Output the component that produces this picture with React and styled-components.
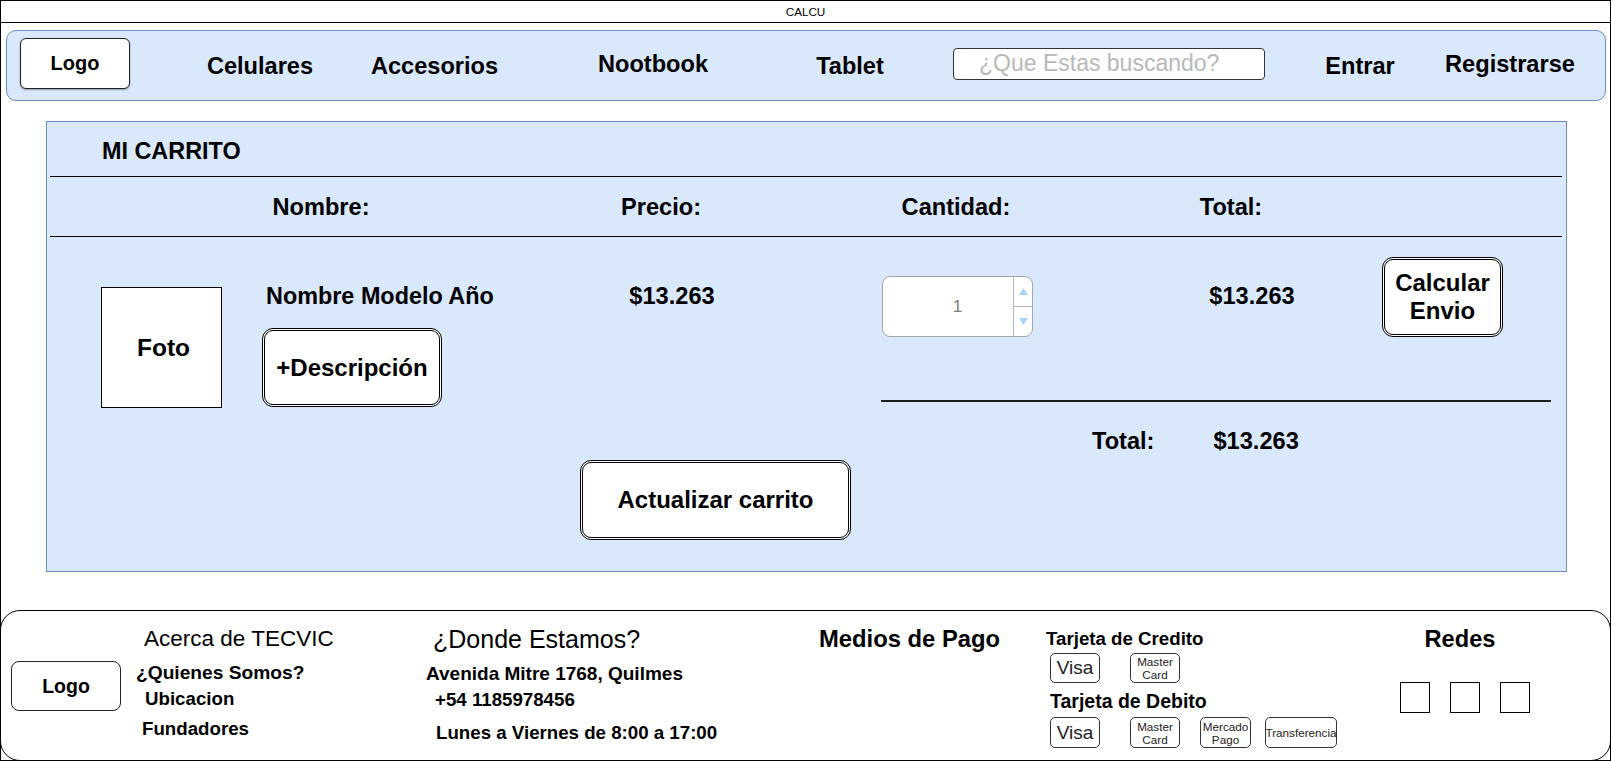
import React from 'react';
import styled, { createGlobalStyle } from 'styled-components';

const GlobalStyle = createGlobalStyle`
  html, body {
    margin: 0;
    padding: 0;
    background: #fff;
  }
  body {
    font-family: "Liberation Sans", Arial, Helvetica, sans-serif;
    color: #000;
  }
  * {
    box-sizing: border-box;
  }
`;

const Frame = styled.div`
  width: 1611px;
  height: 761px;
  border: 1px solid #000;
  display: flex;
  flex-direction: column;
`;

const TitleBar = styled.div`
  height: 22px;
  border-bottom: 1px solid #000;
  font-size: 11.7px;
  line-height: 21px;
  text-align: center;
`;

/* ---------- top navigation ---------- */

const Nav = styled.nav`
  margin: 7px 4px 0 5px;
  height: 71px;
  background: #dae8fc;
  border: 1px solid #6c8ebf;
  border-radius: 10px;
  display: flex;
  align-items: center;
  padding-left: 13px;
`;

const LogoBox = styled.div`
  width: ${(p) => p.$w}px;
  height: ${(p) => p.$h}px;
  margin-top: ${(p) => p.$mt || 0}px;
  margin-bottom: ${(p) => p.$mb || 0}px;
  flex-shrink: 0;
  background: #fff;
  border: 1px solid #222;
  border-radius: ${(p) => p.$r}px;
  box-shadow: ${(p) => (p.$shadow ? '0 1px 2px rgba(0,0,0,0.35)' : 'none')};
  display: flex;
  align-items: center;
  justify-content: center;
  font-weight: bold;
  font-size: ${(p) => p.$fs}px;
`;

const NavLink = styled.a`
  width: ${(p) => p.$w}px;
  margin-left: ${(p) => p.$ml}px;
  margin-bottom: ${(p) => (p.$up ? 4 : 0)}px;
  flex-shrink: 0;
  display: flex;
  justify-content: center;
  white-space: nowrap;
  font-size: 23.6px;
  font-weight: bold;
  color: #000;
  text-decoration: none;
  line-height: 28px;
`;

const SearchInput = styled.input`
  width: 312px;
  height: 32px;
  margin-left: 63px;
  margin-bottom: 4px;
  flex-shrink: 0;
  border: 1px solid #333;
  border-radius: 4px;
  background: #fff;
  text-align: left;
  font-family: "Liberation Sans", Arial, Helvetica, sans-serif;
  font-size: 23px;
  padding: 0 0 0 25px;
  outline: none;

  &::placeholder {
    color: #b8b8b8;
  }
`;

/* ---------- cart panel ---------- */

const Panel = styled.section`
  margin: 20px 43px 0 45px;
  height: 451px;
  background: #dae8fc;
  border: 1px solid #6c8ebf;
  display: flex;
  flex-direction: column;
`;

const PanelTitle = styled.h2`
  margin: 0;
  height: 54px;
  padding: 4px 0 0 55px;
  line-height: 50px;
  font-size: 23.4px;
  font-weight: bold;
`;

const Rule = styled.div`
  height: ${(p) => p.$h || 1}px;
  margin: ${(p) => p.$m};
  background: ${(p) => p.$c || '#000'};
  flex-shrink: 0;
`;

const HeaderRow = styled.div`
  height: 59px;
  display: flex;
  align-items: center;
`;

const Cell = styled.div`
  width: ${(p) => p.$w}px;
  margin-left: ${(p) => p.$ml || 0}px;
  margin-top: ${(p) => p.$mt || 0}px;
  flex-shrink: 0;
  display: flex;
  justify-content: center;
  white-space: nowrap;
  font-size: 23.6px;
  font-weight: bold;
  line-height: 26px;
`;

const ItemRow = styled.div`
  display: flex;
  align-items: flex-start;
`;

const Photo = styled.div`
  width: 121px;
  height: 121px;
  margin: 50px 0 0 54px;
  flex-shrink: 0;
  background: #fff;
  border: 1px solid #000;
  display: flex;
  align-items: center;
  justify-content: center;
  padding-left: 4px;
  font-size: 24.5px;
  font-weight: bold;
`;

const NameCol = styled.div`
  width: 300px;
  margin-left: 40px;
  flex-shrink: 0;
  display: flex;
  flex-direction: column;
  align-items: flex-start;
`;

const ProductName = styled.div`
  margin-top: 46px;
  padding-left: 4px;
  line-height: 26px;
  font-size: 23.4px;
  font-weight: bold;
  white-space: nowrap;
`;

const DoubleButton = styled.button`
  width: ${(p) => p.$w}px;
  height: ${(p) => p.$h}px;
  margin-top: ${(p) => p.$mt || 0}px;
  margin-left: ${(p) => p.$ml || 0}px;
  flex-shrink: 0;
  padding: 0;
  background: #fff;
  border: 3px double #000;
  border-radius: 11px;
  font-family: "Liberation Sans", Arial, Helvetica, sans-serif;
  font-size: 24px;
  font-weight: bold;
  line-height: 28px;
  color: #000;
  cursor: pointer;
`;

const RightGroup = styled.div`
  width: 670px;
  margin-left: 149px;
  flex-shrink: 0;
  display: flex;
  flex-direction: column;
`;

const TopRow = styled.div`
  display: flex;
  align-items: flex-start;
`;

const QtyBox = styled.div`
  width: 151px;
  height: 61px;
  margin: 39px 0 0 1px;
  flex-shrink: 0;
  background: #fff;
  border: 1px solid #a6a6a6;
  border-radius: 8px;
  display: flex;
  overflow: hidden;
`;

const QtyValue = styled.div`
  flex: 1;
  padding-left: 19px;
  display: flex;
  align-items: center;
  justify-content: center;
  font-size: 17px;
  color: #7a7a7a;
`;

const Spinner = styled.div`
  width: 19px;
  border-left: 1px solid #b5b5b5;
  display: flex;
  flex-direction: column;
`;

const SpinBtn = styled.div`
  flex: 1;
  display: flex;
  align-items: center;
  justify-content: center;
  border-top: ${(p) => (p.$down ? '1px solid #b5b5b5' : 'none')};
`;

const Summary = styled.div`
  display: flex;
  margin-top: 26px;
  line-height: 26px;
  font-size: 23.6px;
  font-weight: bold;
`;

const SummaryText = styled.span`
  margin-left: ${(p) => p.$ml}px;
  white-space: nowrap;
`;

/* ---------- footer ---------- */

const Footer = styled.footer`
  margin: auto -1px -1px -1px;
  height: 151px;
  background: #fff;
  border: 1px solid #000;
  border-radius: 20px;
  padding: 15px 0 0 10px;
  display: flex;
  align-items: flex-start;
`;

const FootCol = styled.div`
  width: ${(p) => p.$w}px;
  flex-shrink: 0;
  display: flex;
  flex-direction: column;
  align-items: ${(p) => p.$align || 'flex-start'};
`;

const FootTitle = styled.div`
  margin-left: ${(p) => p.$indent || 0}px;
  margin-right: ${(p) => p.$mr || 0}px;
  line-height: 26px;
  font-size: ${(p) => p.$fs}px;
  font-weight: ${(p) => (p.$bold ? 'bold' : 'normal')};
  white-space: nowrap;
`;

const FootLine = styled.div`
  margin-left: ${(p) => p.$indent || 0}px;
  margin-top: ${(p) => p.$mt || 0}px;
  line-height: 26px;
  font-size: ${(p) => p.$fs || 18.7}px;
  font-weight: bold;
  white-space: nowrap;
`;

const PayRow = styled.div`
  display: flex;
  margin-top: ${(p) => p.$mt}px;
  padding-left: 4px;
`;

const PayBox = styled.div`
  width: ${(p) => p.$w}px;
  height: ${(p) => p.$h}px;
  margin-left: ${(p) => p.$ml || 0}px;
  flex-shrink: 0;
  border: 1px solid #333;
  border-radius: 5px;
  display: flex;
  flex-direction: column;
  align-items: center;
  justify-content: center;
  font-size: ${(p) => (p.$big ? 19 : 11.7)}px;
  line-height: ${(p) => (p.$big ? 22 : 13)}px;
  color: #222;
  white-space: nowrap;
  overflow: visible;
`;

const Socials = styled.div`
  display: flex;
  gap: 20px;
  margin-top: 30px;
`;

const Social = styled.div`
  width: 30px;
  height: 31px;
  border: 1px solid #000;
`;

const Arrow = ({ down }) => (
  <svg width="9" height="7" viewBox="0 0 9 7">
    <path d={down ? 'M0 0 L9 0 L4.5 7 Z' : 'M0 7 L9 7 L4.5 0 Z'} fill="#a8d4f7" />
  </svg>
);

const navItems = [
  { label: 'Celulares', w: 120, ml: 70 },
  { label: 'Accesorios', w: 140, ml: 44.5 },
  { label: 'Nootbook', w: 120, ml: 88.5, up: true },
  { label: 'Tablet', w: 80, ml: 97 },
];

export default function App() {
  return (
    <>
      <GlobalStyle />
      <Frame>
        <TitleBar>CALCU</TitleBar>

        <Nav>
          <LogoBox $w={110} $h={51} $r={6} $fs={20} $mb={4} $shadow>Logo</LogoBox>
          {navItems.map((n) => (
            <NavLink key={n.label} href="#" $w={n.w} $ml={n.ml} $up={n.up}>
              {n.label}
            </NavLink>
          ))}
          <SearchInput placeholder="¿Que Estas buscando?" />
          <NavLink href="#" $w={80} $ml={55}>Entrar</NavLink>
          <NavLink href="#" $w={140} $ml={40} $up>Registrarse</NavLink>
        </Nav>

        <Panel>
          <PanelTitle>MI CARRITO</PanelTitle>
          <Rule $m="0 4px 0 3px" />
          <HeaderRow>
            <Cell $w={200} $ml={174}>Nombre:</Cell>
            <Cell $w={200} $ml={140}>Precio:</Cell>
            <Cell $w={200} $ml={95}>Cantidad:</Cell>
            <Cell $w={200} $ml={75}>Total:</Cell>
          </HeaderRow>
          <Rule $m="0 4px 0 3px" />

          <ItemRow>
            <Photo>Foto</Photo>
            <NameCol>
              <ProductName>Nombre Modelo Año</ProductName>
              <DoubleButton $w={180} $h={79} $mt={19}>+Descripción</DoubleButton>
            </NameCol>
            <Cell $w={120} $ml={50} $mt={46}>$13.263</Cell>

            <RightGroup>
              <TopRow>
                <QtyBox>
                  <QtyValue>1</QtyValue>
                  <Spinner>
                    <SpinBtn><Arrow /></SpinBtn>
                    <SpinBtn $down><Arrow down /></SpinBtn>
                  </Spinner>
                </QtyBox>
                <Cell $w={120} $ml={159} $mt={46}>$13.263</Cell>
                <DoubleButton $w={121} $h={80} $mt={20} $ml={70}>
                  Calcular
                  <br />
                  Envio
                </DoubleButton>
              </TopRow>
              <Rule $h={2} $c="#1f1f1f" $m="63px 0 0 0" />
              <Summary>
                <SummaryText $ml={211}>Total:</SummaryText>
                <SummaryText $ml={59}>$13.263</SummaryText>
              </Summary>
            </RightGroup>
          </ItemRow>

          <DoubleButton $w={271} $h={80} $mt={6} $ml={533}>Actualizar carrito</DoubleButton>
        </Panel>

        <Footer>
          <LogoBox $w={110} $h={50} $r={8} $fs={19.5} $mt={35}>Logo</LogoBox>

          <FootCol $w={300}>
            <FootTitle $fs={22.5} $indent={23}>Acerca de TECVIC</FootTitle>
            <FootLine $indent={15} $mt={8} $fs={19.2}>¿Quienes Somos?</FootLine>
            <FootLine $indent={24}>Ubicacion</FootLine>
            <FootLine $indent={21} $mt={4}>Fundadores</FootLine>
          </FootCol>

          <FootCol $w={398}>
            <FootTitle $fs={25} $indent={12}>¿Donde Estamos?</FootTitle>
            <FootLine $indent={5} $mt={9} $fs={19}>Avenida Mitre 1768, Quilmes</FootLine>
            <FootLine $indent={14}>+54 1185978456</FootLine>
            <FootLine $indent={15} $mt={7}>Lunes a Viernes de 8:00 a 17:00</FootLine>
          </FootCol>

          <FootCol $w={227}>
            <FootTitle $fs={23.8} $bold>Medios de Pago</FootTitle>
          </FootCol>

          <FootCol $w={294}>
            <FootTitle $fs={18.7} $bold>Tarjeta de Credito</FootTitle>
            <PayRow $mt={1}>
              <PayBox $w={50} $h={30} $big>Visa</PayBox>
              <PayBox $w={50} $h={30} $ml={30}>
                <span>Master</span>
                <span>Card</span>
              </PayBox>
            </PayRow>
            <FootLine $indent={4} $mt={5} $fs={19.5}>Tarjeta de Debito</FootLine>
            <PayRow $mt={3}>
              <PayBox $w={50} $h={31} $big>Visa</PayBox>
              <PayBox $w={50} $h={31} $ml={30}>
                <span>Master</span>
                <span>Card</span>
              </PayBox>
              <PayBox $w={51} $h={31} $ml={20}>
                <span>Mercado</span>
                <span>Pago</span>
              </PayBox>
              <PayBox $w={72} $h={31} $ml={14}>Transferencia</PayBox>
            </PayRow>
          </FootCol>

          <FootCol $w={250} $align="center">
            <FootTitle $fs={23.6} $bold $mr={10}>Redes</FootTitle>
            <Socials>
              <Social />
              <Social />
              <Social />
            </Socials>
          </FootCol>
        </Footer>
      </Frame>
    </>
  );
}
